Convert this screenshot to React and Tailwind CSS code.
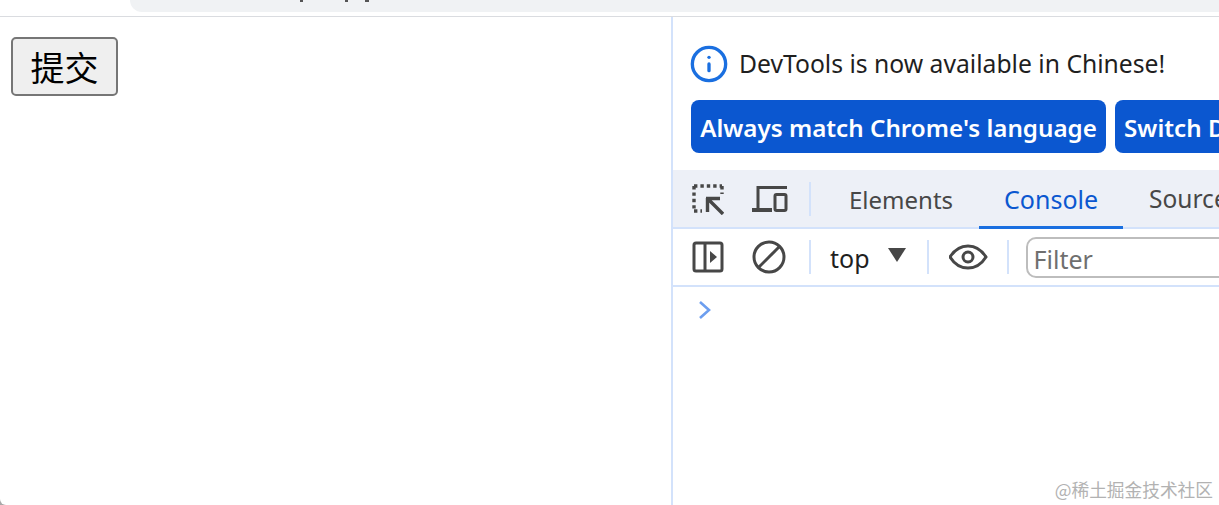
import { Info } from 'lucide-react';

const uiFont = "font-['Noto_Sans','Open_Sans',sans-serif]";

function InspectIcon() {
  return (
    <svg width="32" height="32" viewBox="0 0 32 32" fill="none" stroke="#474747" className="shrink-0">
      <path d="M2 3h28M2 3v25" strokeWidth="3.4" strokeDasharray="3.4 3" />
      <path d="M30 3v8M2 28h8" strokeWidth="3.4" strokeDasharray="3.4 3" />
      <path d="M14 15.5h14M15.5 15v14M15.5 15.5 31 31" strokeWidth="3.4" />
    </svg>
  );
}

function DeviceIcon() {
  return (
    <svg width="38" height="30" viewBox="0 0 38 30" fill="none" stroke="#474747" strokeWidth="3" className="ml-[27px] shrink-0">
      <path d="M7 24V3.5h29" />
      <path d="M1 26h20" strokeWidth="4" />
      <rect x="24" y="10.5" width="11" height="16" rx="1.5" />
    </svg>
  );
}

function SidebarIcon() {
  return (
    <svg width="32" height="32" viewBox="0 0 32 32" fill="none" stroke="#474747" strokeWidth="3" className="shrink-0">
      <rect x="2" y="2" width="28" height="28" rx="2" />
      <path d="M13 2v28" />
      <path d="M18 10l7 6-7 6z" fill="#474747" stroke="none" />
    </svg>
  );
}

function BlockIcon() {
  return (
    <svg width="34" height="34" viewBox="0 0 34 34" fill="none" stroke="#474747" strokeWidth="3" className="ml-[28px] shrink-0">
      <circle cx="17" cy="17" r="15" />
      <path d="M7 27 27 7" />
    </svg>
  );
}

function EyeIcon() {
  return (
    <svg width="40" height="26" viewBox="0 0 40 26" fill="none" stroke="#474747" strokeWidth="3" className="ml-5 shrink-0">
      <path d="M1 13C6 5 12 2 19 2s13 3 18 11c-5 8-11 11-18 11S6 21 1 13z" />
      <circle cx="19" cy="13" r="5" />
    </svg>
  );
}

function Divider({ className }) {
  return <div className={`h-[34px] w-0.5 shrink-0 bg-[#d3e2fb] ${className}`} />;
}

export default function App() {
  return (
    <div className="bg-[#a8a8a8]">
      <div className={`flex h-[505px] w-full flex-col overflow-hidden rounded-bl-[6px] bg-white ${uiFont}`}>
        <header className="h-[17px] shrink-0 border-b border-[#dadce0] pl-[130px]">
          <div className="relative h-3 rounded-bl-[14px] bg-[#f0f2f4]">
            <span className="absolute left-[170px] top-0 h-[2px] w-[3px] bg-[#555]" />
            <span className="absolute left-[215px] top-0 h-[2px] w-[3px] bg-[#555]" />
            <span className="absolute left-[235px] top-0 h-[2px] w-1 bg-[#555]" />
          </div>
        </header>

        <div className="flex min-h-0 flex-1">
          <main className="w-[671px] shrink-0 pl-[11px] pt-[20px]">
            <button className="h-[59px] w-[107px] rounded-[5px] border-2 border-[#767676] bg-[#efefef] text-[34px] leading-none text-black font-['Noto_Sans_CJK_SC',sans-serif]">
              提交
            </button>
          </main>

          <aside className="relative min-w-0 flex-1 overflow-hidden border-l-2 border-[#d3e2fb]">
            <div className="pl-[18px] pt-[27px]">
              <div className="flex h-[40px] items-center gap-[10px]">
                <Info size={40} color="#1a6fe0" strokeWidth={2} className="-ml-[2px] shrink-0" />
                <span className="whitespace-nowrap text-[24.7px] text-[#1f1f1f]">DevTools is now available in Chinese!</span>
              </div>
              <div className="mt-[16px] flex gap-[9px] whitespace-nowrap text-[24.2px] font-semibold text-white">
                <div className="flex h-[53px] w-[415px] shrink-0 items-center justify-center rounded-[8px] bg-[#0b57d0] pt-1">
                  Always match Chrome's language
                </div>
                <div className="flex h-[53px] w-[300px] shrink-0 items-center rounded-[8px] bg-[#0b57d0] pl-[9px] pt-1">
                  Switch DevTools to Chinese
                </div>
              </div>
            </div>

            <nav className="mt-[17px] flex h-[59px] items-center border-b-2 border-[#d3e2fb] bg-[#edf0f7] pl-[19px]">
              <InspectIcon />
              <DeviceIcon />
              <Divider className="ml-5" />
              <div className="ml-3 flex h-full shrink-0 whitespace-nowrap text-[#474747]">
                <span className="flex items-center px-[26px] pt-0.5 text-[24px]">Elements</span>
                <span className="relative flex items-center pl-[25px] pr-[25px] pt-0.5 text-[25px] text-[#0b57d0]">
                  Console
                  <span className="absolute inset-x-0 -bottom-0.5 h-[3px] bg-[#1a6fe0]" />
                </span>
                <span className="flex items-center px-[26px] pt-0.5 text-[24.5px]">Sources</span>
              </div>
            </nav>

            <div className="flex h-[58px] items-center border-b-2 border-[#d3e2fb] pl-[19px]">
              <SidebarIcon />
              <BlockIcon />
              <Divider className="ml-[23px]" />
              <span className="ml-[19px] shrink-0 pt-[3px] text-[25px] text-[#1f1f1f]">top</span>
              <span className="mb-1 ml-[18px] h-0 w-0 shrink-0 border-x-[9px] border-t-[14px] border-x-transparent border-t-[#474747]" />
              <Divider className="ml-[21px]" />
              <EyeIcon />
              <Divider className="ml-[18px]" />
              <div className="ml-[17px] flex h-[41px] w-[300px] shrink-0 items-center rounded-[10px] border-2 border-[#bdbdbd] pl-[6px] pt-[5px] text-[25px] text-[#6f6f6f]">
                Filter
              </div>
            </div>

            <svg width="16" height="20" viewBox="0 0 16 20" fill="none" stroke="#6c9eef" strokeWidth="2.6" className="ml-6 mt-[13px]">
              <path d="M3 2l9 8-9 8" />
            </svg>

            <span className="absolute bottom-[4px] right-[6px] whitespace-nowrap text-[17.7px] leading-6 text-[#b2b2b2] font-['Noto_Sans_CJK_SC',sans-serif]">
              @稀土掘金技术社区
            </span>
          </aside>
        </div>
      </div>
    </div>
  );
}
